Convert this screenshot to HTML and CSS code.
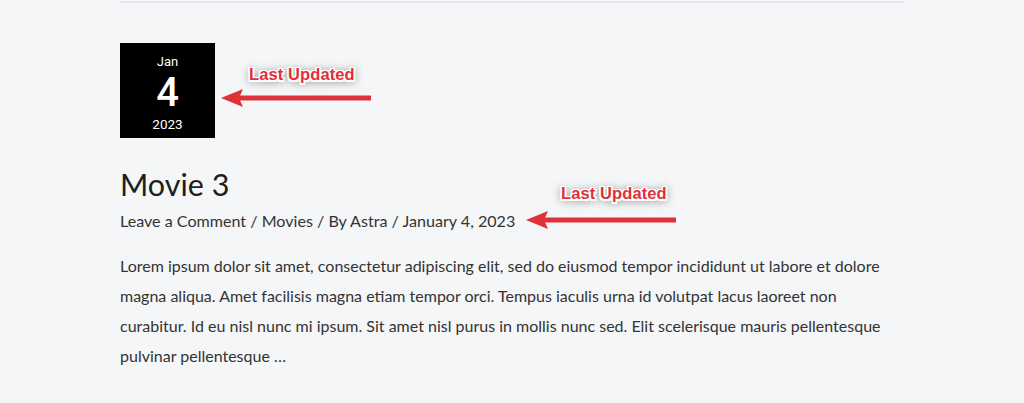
FILE: index.html
```html
<!DOCTYPE html>
<html>
<head>
<meta charset="utf-8">
<link rel="stylesheet" href="styles.css">
</head>
<body>
<div class="page">
  <article class="post">
    <div class="rule"></div>
    <div class="date-box">
      <span class="month">Jan</span>
      <span class="day">4</span>
      <span class="year">2023</span>
    </div>
    <h2 class="title">Movie 3</h2>
    <div class="meta">Leave a Comment / Movies / By Astra / January 4, 2023</div>
    <p class="excerpt">Lorem ipsum dolor sit amet, consectetur adipiscing elit, sed do eiusmod tempor incididunt ut labore et dolore magna aliqua. Amet facilisis magna etiam tempor orci. Tempus iaculis urna id volutpat lacus laoreet non curabitur. Id eu nisl nunc mi ipsum. Sit amet nisl purus in mollis nunc sed. Elit scelerisque mauris pellentesque pulvinar pellentesque …</p>

    <div class="note note-1">
      <span class="note-label">Last Updated</span>
      <svg class="arrow" width="152" height="20" viewBox="0 0 152 20"><path d="M150 10 H18" stroke="#e0303a" stroke-width="5"/><path d="M0 10 L22 1 L18 10 L22 19 Z" fill="#e0303a"/></svg>
    </div>
    <div class="note note-2">
      <span class="note-label">Last Updated</span>
      <svg class="arrow" width="152" height="20" viewBox="0 0 152 20"><path d="M150 10 H18" stroke="#e0303a" stroke-width="5"/><path d="M0 10 L22 1 L18 10 L22 19 Z" fill="#e0303a"/></svg>
    </div>
  </article>
</div>
</body>
</html>
```
FILE: styles.css
```css
* { box-sizing: border-box; }
html, body { margin: 0; padding: 0; }
body {
  background: #f5f6f8;
  font-family: Lato, "Open Sans", sans-serif;
  color: #3a3a3a;
  width: 1024px;
  height: 403px;
  overflow: hidden;
}
.page {
  padding: 0 119px 0 120px;
}
.post {
  position: relative;
  display: flex;
  flex-direction: column;
  align-items: flex-start;
}
.rule {
  align-self: stretch;
  height: 2px;
  margin-top: 1px;
  background: #e6e7ea;
}
.date-box {
  margin-top: 40px;
  width: 95px;
  height: 95px;
  background: #000;
  color: #fff;
  font-family: Roboto, "Liberation Sans", sans-serif;
  display: flex;
  flex-direction: column;
  align-items: center;
  justify-content: flex-start;
  padding-top: 11px;
}
.month { font-size: 13px; line-height: 16px; }
.day { font-size: 40px; line-height: 46px; font-weight: 500; }
.year { font-size: 13.5px; line-height: 16px; }
.title {
  margin: 27px 0 0;
  font-weight: 400;
  font-size: 30.5px;
  line-height: 38px;
  color: #1e1e1e;
}
.meta {
  margin-top: 6px;
  font-size: 16.1px;
  line-height: 24px;
  color: #333;
}
.excerpt {
  margin: 18px 0 0;
  font-size: 16px;
  line-height: 30px;
  color: #333;
}
.note {
  position: absolute;
  width: 160px;
  height: 50px;
}
.note-label {
  position: absolute;
  font-family: "Liberation Sans", Arial, sans-serif;
  font-weight: 700;
  font-size: 16.5px;
  letter-spacing: 0.1px;
  color: #e0303a;
  white-space: nowrap;
  text-shadow:
    -1.5px -1.5px 0 #fff, 1.5px -1.5px 0 #fff, -1.5px 1.5px 0 #fff, 1.5px 1.5px 0 #fff,
    0 -1.5px 0 #fff, 0 1.5px 0 #fff, -1.5px 0 0 #fff, 1.5px 0 0 #fff,
    0 0 8px rgba(0,0,0,0.5), 0 3px 10px rgba(0,0,0,0.35);
}
.arrow { position: absolute; left: 0; }
.note-1 { left: 101px; top: 63px; }
.note-1 .note-label { left: 28px; top: 2px; }
.note-1 .arrow { top: 25px; }
.note-2 { left: 406px; top: 183px; }
.note-2 .note-label { left: 35px; top: 1px; }
.note-2 .arrow { top: 27px; }
```
